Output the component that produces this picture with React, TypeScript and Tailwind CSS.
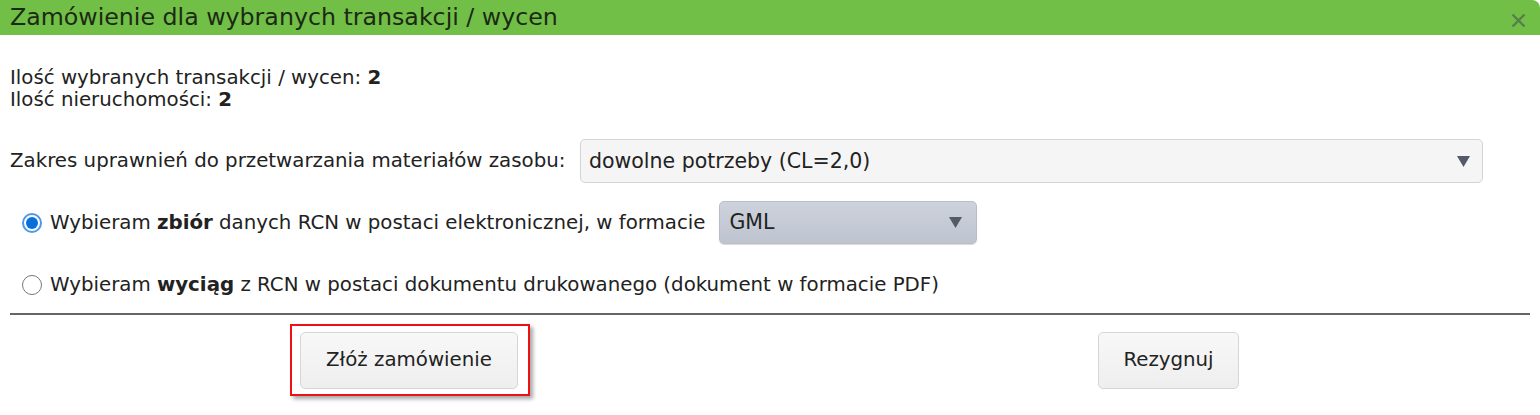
import React from "react";

export default function App() {
  return (
    <div className="w-[1540px] h-[415px] bg-white text-[#222] overflow-hidden" style={{ fontFamily: '"DejaVu Sans", sans-serif' }}>
      <div className="h-[35px] bg-[#72bf47] rounded-tr-[8px] flex items-center justify-between pl-[10px] pr-[14px]">
        <span className="text-[23.7px] text-[#1b2a14] leading-none">Zamówienie dla wybranych transakcji / wycen</span>
        <svg width="15" height="15" viewBox="0 0 15 15" className="mt-[5px]">
          <path d="M1.5 1.5 L13.5 13.5 M13.5 1.5 L1.5 13.5" stroke="#55804a" strokeWidth="2.4" />
        </svg>
      </div>
      <div className="px-[10px]">
        <div className="pt-[32px] text-[19.8px] leading-[22px]">
          <div>Ilość wybranych transakcji / wycen: <b>2</b></div>
          <div>Ilość nieruchomości: <b>2</b></div>
        </div>
        <div className="mt-[28px] flex items-center text-[19.8px]">
          <span className="w-[570px]">Zakres uprawnień do przetwarzania materiałów zasobu:</span>
          <div className="w-[903px] h-[44px] bg-[#f5f5f5] border border-[#d4d4d4] rounded-[5px] flex items-center justify-between pl-[8px] pr-[12px]">
            <span className="text-[20.5px]">dowolne potrzeby (CL=2,0)</span>
            <svg width="13" height="11" viewBox="0 0 13 11"><path d="M0 0 H13 L6.5 11 Z" fill="#555b66" /></svg>
          </div>
        </div>
        <div className="mt-[18px] flex items-center text-[19.8px] pl-[12px]">
          <span className="w-[20px] h-[20px] rounded-full border-[2px] border-[#4a98ee] flex items-center justify-center bg-white">
            <span className="w-[12px] h-[12px] rounded-full bg-[#0a6fdb]" />
          </span>
          <span className="ml-[8px]">Wybieram <b>zbiór</b> danych RCN w postaci elektronicznej, w formacie</span>
          <div className="ml-[14px] w-[258px] h-[43px] rounded-[5px] border border-[#b8bdc8] bg-gradient-to-b from-[#cdd2dc] to-[#bec4cf] flex items-center justify-between pl-[9px] pr-[14px] shadow-[0_1px_1px_rgba(0,0,0,0.15)]">
            <span className="text-[20.5px]">GML</span>
            <svg width="13" height="11" viewBox="0 0 13 11"><path d="M0 0 H13 L6.5 11 Z" fill="#555b66" /></svg>
          </div>
        </div>
        <div className="mt-[26px] flex items-center text-[19.8px] pl-[12px]">
          <span className="w-[20px] h-[20px] rounded-full border-[1.5px] border-[#777] bg-white" />
          <span className="ml-[8px]">Wybieram <b>wyciąg</b> z RCN w postaci dokumentu drukowanego (dokument w formacie PDF)</span>
        </div>
        <div className="mt-[13px] h-[2px] bg-[#666]" />
        <div className="flex items-start mt-[9px]">
          <div className="ml-[280px] border-[2px] border-[#ee1111] pl-[8px] pr-[10px] pt-[6px] pb-[5px] shadow-[3px_3px_4px_rgba(0,0,0,0.35)]">
            <button className="block w-[218px] h-[57px] bg-gradient-to-b from-[#f8f8f8] to-[#eeeeee] border border-[#d6d6d6] rounded-[5px] text-[19.8px] text-[#222]">Złóż zamówienie</button>
          </div>
          <div className="ml-[568px] pt-[8px]">
            <button className="block w-[141px] h-[57px] bg-gradient-to-b from-[#f8f8f8] to-[#eeeeee] border border-[#d6d6d6] rounded-[5px] text-[19.8px] text-[#222]">Rezygnuj</button>
          </div>
        </div>
      </div>
    </div>
  );
}
